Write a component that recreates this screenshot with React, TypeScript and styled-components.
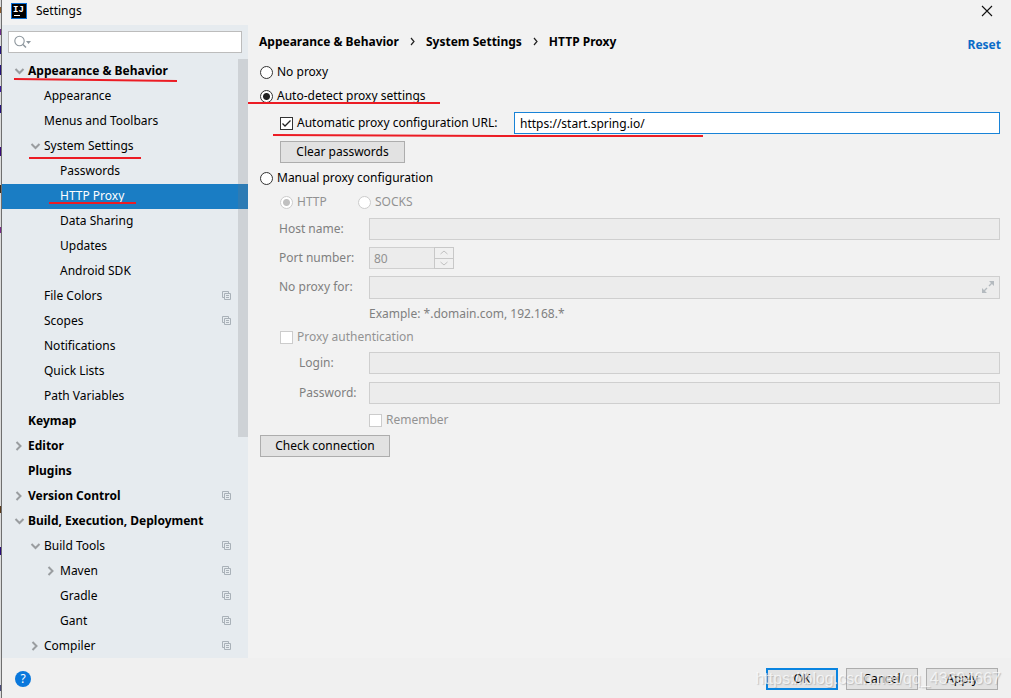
import React from "react";
import styled, { createGlobalStyle, css } from "styled-components";

const GlobalStyle = createGlobalStyle`
  *, *::before, *::after { box-sizing: border-box; }
  body {
    margin: 0;
    font-family: "Noto Sans", "Open Sans", sans-serif;
    font-size: 12px;
    line-height: 16px;
    color: #000;
    background: #f2f2f2;
  }
  button, input { font: inherit; color: inherit; margin: 0; }
`;

const Screen = styled.div`
  display: flex;
  height: 100vh;
  min-height: 500px;
  position: relative;
  overflow: hidden;
`;

const EditorEdge = styled.div`
  flex: none;
  width: 2px;
  background: #dcdcdc;
  border-right: 1px solid #6f6f6f;
  overflow: hidden;
`;

const Dialog = styled.div`
  flex: 1;
  min-width: 0;
  display: flex;
  flex-direction: column;
`;

const TitleBar = styled.header`
  flex: none;
  display: flex;
  align-items: center;
  gap: 9px;
  height: 25px;
  padding: 0 18px 3px 9px;
`;

const Title = styled.h1`
  flex: 1;
  margin: 0;
  font-size: 12px;
  font-weight: 400;
`;

const IconButton = styled.button`
  display: flex;
  padding: 0;
  border: 0;
  background: none;
`;

const Body = styled.div`
  flex: 1;
  min-height: 0;
  display: flex;
`;

const Sidebar = styled.nav`
  flex: none;
  width: 246px;
  display: flex;
  flex-direction: column;
  background: #e6ebef;
`;

const SearchBox = styled.label`
  flex: none;
  display: flex;
  align-items: center;
  height: 22px;
  margin: 6px;
  padding-left: 5px;
  border: 1px solid #bcbcbc;
  background: #fff;
`;

const SearchInput = styled.input`
  flex: 1;
  min-width: 0;
  padding: 0 4px;
  border: 0;
  outline: 0;
  background: none;
`;

const TreeArea = styled.div`
  flex: 1;
  min-height: 0;
  position: relative;
  overflow: hidden;
`;

const Tree = styled.ul`
  margin: 0;
  padding: 0;
  list-style: none;
`;

const TreeRow = styled.button<{ $level: number; $bold?: boolean; $selected?: boolean }>`
  display: flex;
  align-items: center;
  width: 100%;
  height: 25px;
  padding: 0 17px 2px ${(p) => 10 + p.$level * 16}px;
  border: 0;
  text-align: left;
  font-weight: ${(p) => (p.$bold ? 700 : 400)};
  color: ${(p) => (p.$selected ? "#fff" : "#000")};
  background: ${(p) => (p.$selected ? "#1a7dc4" : "transparent")};
`;

const Twisty = styled.span`
  flex: none;
  display: flex;
  width: 16px;
`;

const RowText = styled.span`
  flex: 1;
  white-space: nowrap;
`;

const ScrollThumb = styled.div`
  position: absolute;
  top: 0;
  right: 0;
  width: 10px;
  height: 378px;
  background: rgba(120, 120, 125, 0.21);
`;

const Panel = styled.main`
  flex: 1;
  min-width: 0;
  padding: 0 11px;
`;

const PanelHeader = styled.div`
  display: flex;
  justify-content: space-between;
  align-items: center;
  height: 35px;
  margin-right: -1px;
  padding-bottom: 2px;
`;

const Crumbs = styled.div`
  display: flex;
  align-items: center;
  gap: 9px;
  font-weight: 700;
`;

const ResetLink = styled.a`
  padding-top: 6px;
  font-weight: 700;
  color: #0a6cc8;
  text-decoration: none;
`;

const FormRow = styled.div<{ $height?: number; $indent?: number; $off?: boolean }>`
  display: flex;
  align-items: center;
  height: ${(p) => p.$height ?? 24}px;
  padding-left: ${(p) => p.$indent ?? 0}px;
  color: ${(p) => (p.$off ? "#808080" : "#000")};
`;

const CheckLabel = styled.label<{ $width?: number; $off?: boolean }>`
  flex: none;
  display: flex;
  align-items: center;
  gap: 4px;
  width: ${(p) => (p.$width ? `${p.$width}px` : "auto")};
  color: ${(p) => (p.$off ? "#929292" : "inherit")};
`;

const FieldLabel = styled.label<{ $width: number }>`
  flex: none;
  width: ${(p) => p.$width}px;
`;

const mark = css`
  appearance: none;
  flex: none;
  width: 13px;
  height: 13px;
  border: 1px solid #333;
  background: #fff center / 100% no-repeat;
  &:disabled { border-color: #cccccc; }
`;

const Radio = styled.input.attrs({ type: "radio" })`
  ${mark}
  border-radius: 50%;
  &:checked { background-image: radial-gradient(circle, #222 3px, transparent 4px); }
  &:disabled:checked { background-image: radial-gradient(circle, #c0c0c0 3px, transparent 4px); }
`;

const CheckInput = styled.input.attrs({ type: "checkbox" })`
  ${mark}
`;

const CheckHolder = styled.span`
  display: flex;
  position: relative;
`;

const Tick = styled.svg`
  position: absolute;
  inset: 0;
  pointer-events: none;
`;

const TextField = styled.input`
  flex: 1;
  min-width: 0;
  height: 22px;
  padding: 0 5px;
  border: 1px solid #cfcfcf;
  border-radius: 0;
  outline: 0;
  background: #ececec;
`;

const UrlField = styled(TextField)`
  border-color: #1883d7;
  background: #fff;
`;

const ExpandHolder = styled.div`
  flex: 1;
  display: flex;
  align-items: center;
  height: 23px;
  padding-right: 5px;
  border: 1px solid #cfcfcf;
  background: #ececec;
`;

const BareField = styled(TextField)`
  border: 0;
  height: 20px;
`;

const PortField = styled(TextField)`
  flex: none;
  width: 65px;
  padding: 0 4px;
  border-right: 0;
  color: #929292;
`;

const Spinner = styled.div`
  display: flex;
  flex-direction: column;
  width: 20px;
  height: 22px;
  border: 1px solid #c8c8c8;
`;

const SpinButton = styled.button`
  flex: 1;
  display: flex;
  align-items: center;
  justify-content: center;
  min-height: 0;
  padding: 0;
  border: 0;
  background: #f0f0f0;
  & + & { border-top: 1px solid #c8c8c8; }
`;

const PushButton = styled.button<{ $width: number; $primary?: boolean }>`
  width: ${(p) => p.$width}px;
  height: 22px;
  padding: 0;
  line-height: 18px;
  border: ${(p) => (p.$primary ? "2px solid #0a84e0" : "1px solid #adadad")};
  background: #e2e2e2;
`;

const Footer = styled.footer`
  flex: none;
  display: flex;
  align-items: center;
  gap: 8px;
  height: 40px;
  padding: 2px 13px 0;
  background: #f0f0f0;
`;

const FooterSpace = styled.span`
  flex: 1;
`;

const Watermark = styled.span`
  position: absolute;
  right: 10px;
  bottom: 9px;
  font-family: "Liberation Sans", sans-serif;
  font-size: 16px;
  line-height: 20px;
  color: rgba(255, 255, 255, 0.7);
  text-shadow: 1px 1px 1px rgba(130, 130, 130, 0.4);
  pointer-events: none;
`;

const Marks = styled.svg`
  position: absolute;
  top: 0;
  left: 0;
  pointer-events: none;
`;

const ideMarks: [number, number, string][] = [
  [7, 6, "#8a5a2a"], [29, 6, "#6a2a8a"], [46, 8, "#25127a"], [65, 10, "#25127a"],
  [86, 6, "#3a1a9a"], [105, 8, "#25127a"], [147, 9, "#3a0a7a"], [185, 8, "#3a2a1a"],
  [227, 6, "#7a2a8a"], [506, 7, "#5a3a1a"], [547, 8, "#2a0a7a"], [685, 6, "#4a4a7a"],
];

function CodeSliver() {
  return (
    <svg width="1" height="698" aria-hidden="true">
      {ideMarks.map(([y, h, c]) => <rect key={y} y={y} width="1" height={h} fill={c} />)}
    </svg>
  );
}

function Logo() {
  return (
    <svg width="16" height="16" viewBox="0 0 16 16" aria-hidden="true">
      <rect width="16" height="16" fill="#0a6fd6" />
      <rect x="1" y="1" width="14" height="14" fill="#000" />
      <text x="2" y="9" fontSize="9" fontWeight="700" fontFamily="Liberation Mono, monospace" fill="#fff">IJ</text>
      <path d="M3 12.5h6" stroke="#fff" strokeWidth="1" />
    </svg>
  );
}

function Chevron({ open }: { open: boolean }) {
  return (
    <svg width="14" height="12" viewBox="0 0 14 12" fill="none" stroke="#9a9da0" strokeWidth="2" aria-hidden="true">
      <path d={open ? "M3.5 4L7.5 8L11.5 4" : "M4.5 2L8.5 6L4.5 10"} />
    </svg>
  );
}

function ProjectIcon() {
  return (
    <svg width="9" height="9" viewBox="0 0 9 9" fill="none" stroke="#a9b1b8" aria-hidden="true">
      <path d="M2 6.5H.5V.5H6.5V2M2.5 2.5H8.5V8.5H2.5ZM4 4.5H7M4 6.5H7" />
    </svg>
  );
}

type Item = { text: string; level: number; open?: boolean; project?: boolean; bold?: boolean; selected?: boolean };

const items: Item[] = [
  { text: "Appearance & Behavior", level: 0, open: true, bold: true },
  { text: "Appearance", level: 1 },
  { text: "Menus and Toolbars", level: 1 },
  { text: "System Settings", level: 1, open: true },
  { text: "Passwords", level: 2 },
  { text: "HTTP Proxy", level: 2, selected: true },
  { text: "Data Sharing", level: 2 },
  { text: "Updates", level: 2 },
  { text: "Android SDK", level: 2 },
  { text: "File Colors", level: 1, project: true },
  { text: "Scopes", level: 1, project: true },
  { text: "Notifications", level: 1 },
  { text: "Quick Lists", level: 1 },
  { text: "Path Variables", level: 1 },
  { text: "Keymap", level: 0, bold: true },
  { text: "Editor", level: 0, open: false, bold: true },
  { text: "Plugins", level: 0, bold: true },
  { text: "Version Control", level: 0, open: false, bold: true, project: true },
  { text: "Build, Execution, Deployment", level: 0, open: true, bold: true },
  { text: "Build Tools", level: 1, open: true, project: true },
  { text: "Maven", level: 2, open: false, project: true },
  { text: "Gradle", level: 2, project: true },
  { text: "Gant", level: 2, project: true },
  { text: "Compiler", level: 1, open: false, project: true },
];

function CrumbArrow() {
  return (
    <svg width="9" height="9" viewBox="0 0 9 9" fill="none" stroke="#222" strokeWidth="1.2" aria-hidden="true">
      <path d="M3 1L6 4.5L3 8" />
    </svg>
  );
}

export default function App() {
  return (
    <Screen>
      <GlobalStyle />
      <EditorEdge><CodeSliver /></EditorEdge>
      <Dialog>
        <TitleBar>
          <Logo />
          <Title>Settings</Title>
          <IconButton aria-label="Close">
            <svg width="12" height="12" viewBox="0 0 12 12" stroke="#111" strokeWidth="1.1" aria-hidden="true">
              <path d="M1 1L11 11M11 1L1 11" />
            </svg>
          </IconButton>
        </TitleBar>
        <Body>
          <Sidebar aria-label="Settings pages">
            <SearchBox>
              <svg width="17" height="14" viewBox="0 0 17 14" fill="none" stroke="#8d969d" aria-hidden="true">
                <circle cx="5.5" cy="6" r="4.7" strokeWidth="1.1" />
                <path d="M9 9.5L12 12.5" strokeWidth="1.5" />
                <path d="M12 6h5l-2.5 3z" fill="#8d969d" stroke="none" />
              </svg>
              <SearchInput type="text" aria-label="Search settings" />
            </SearchBox>
            <TreeArea>
              <Tree>
                {items.map((it) => (
                  <li key={it.text}>
                    <TreeRow $level={it.level} $bold={it.bold} $selected={it.selected} aria-expanded={it.open}>
                      <Twisty>{it.open !== undefined && <Chevron open={it.open} />}</Twisty>
                      <RowText>{it.text}</RowText>
                      {it.project && <ProjectIcon />}
                    </TreeRow>
                  </li>
                ))}
              </Tree>
              <ScrollThumb />
            </TreeArea>
          </Sidebar>
          <Panel>
            <PanelHeader>
              <Crumbs>
                <span>Appearance &amp; Behavior</span>
                <CrumbArrow />
                <span>System Settings</span>
                <CrumbArrow />
                <span>HTTP Proxy</span>
              </Crumbs>
              <ResetLink href="#reset">Reset</ResetLink>
            </PanelHeader>
            <FormRow $indent={1}>
              <CheckLabel><Radio name="mode" />No proxy</CheckLabel>
            </FormRow>
            <FormRow $indent={1}>
              <CheckLabel><Radio name="mode" defaultChecked />Auto-detect proxy settings</CheckLabel>
            </FormRow>
            <FormRow $height={30} $indent={21}>
              <CheckLabel $width={234}>
                <CheckHolder>
                  <CheckInput defaultChecked />
                  <Tick width="13" height="13" viewBox="0 0 13 13" fill="none" stroke="#222" strokeWidth="1.3">
                    <path d="M2.5 6.5L5 9L10.5 3.5" />
                  </Tick>
                </CheckHolder>
                Automatic proxy configuration URL:
              </CheckLabel>
              <UrlField type="text" aria-label="Automatic proxy configuration URL" defaultValue="https://start.spring.io/" />
            </FormRow>
            <FormRow $height={28} $indent={21}>
              <PushButton $width={125}>Clear passwords</PushButton>
            </FormRow>
            <FormRow $indent={1}>
              <CheckLabel><Radio name="mode" />Manual proxy configuration</CheckLabel>
            </FormRow>
            <FormRow $indent={21}>
              <CheckLabel $width={78} $off><Radio name="kind" disabled defaultChecked />HTTP</CheckLabel>
              <CheckLabel $off><Radio name="kind" disabled />SOCKS</CheckLabel>
            </FormRow>
            <FormRow $height={30} $indent={20} $off>
              <FieldLabel $width={90} htmlFor="host">Host name:</FieldLabel>
              <TextField id="host" type="text" disabled />
            </FormRow>
            <FormRow $height={28} $indent={20} $off>
              <FieldLabel $width={90} htmlFor="port">Port number:</FieldLabel>
              <PortField id="port" type="text" disabled defaultValue="80" />
              <Spinner>
                <SpinButton disabled aria-label="Increase">
                  <svg width="8" height="5" viewBox="0 0 8 5" fill="none" stroke="#c0c0c0"><path d="M.5 4L4 1L7.5 4" /></svg>
                </SpinButton>
                <SpinButton disabled aria-label="Decrease">
                  <svg width="8" height="5" viewBox="0 0 8 5" fill="none" stroke="#c0c0c0"><path d="M.5 1L4 4L7.5 1" /></svg>
                </SpinButton>
              </Spinner>
            </FormRow>
            <FormRow $height={30} $indent={20} $off>
              <FieldLabel $width={90} htmlFor="bypass">No proxy for:</FieldLabel>
              <ExpandHolder>
                <BareField id="bypass" type="text" disabled />
                <svg width="12" height="12" viewBox="0 0 12 12" fill="#b4babf" stroke="#b4babf" aria-hidden="true">
                  <path d="M7 0H12V5ZM0 7V12H5Z" stroke="none" />
                  <path d="M10 2L7 5M2 10L5 7" strokeWidth="1.4" />
                </svg>
              </ExpandHolder>
            </FormRow>
            <FormRow $indent={110} $off>Example: *.domain.com, 192.168.*</FormRow>
            <FormRow $height={22} $indent={21}>
              <CheckLabel $off><CheckInput disabled />Proxy authentication</CheckLabel>
            </FormRow>
            <FormRow $height={30} $indent={40} $off>
              <FieldLabel $width={70} htmlFor="login">Login:</FieldLabel>
              <TextField id="login" type="text" disabled />
            </FormRow>
            <FormRow $height={30} $indent={40} $off>
              <FieldLabel $width={70} htmlFor="password">Password:</FieldLabel>
              <TextField id="password" type="password" disabled />
            </FormRow>
            <FormRow $indent={110}>
              <CheckLabel $off><CheckInput disabled />Remember</CheckLabel>
            </FormRow>
            <FormRow $height={28} $indent={1}>
              <PushButton $width={130}>Check connection</PushButton>
            </FormRow>
          </Panel>
        </Body>
        <Footer>
          <IconButton aria-label="Help">
            <svg width="16" height="16" viewBox="0 0 16 16" aria-hidden="true">
              <circle cx="8" cy="8" r="8" fill="#0a78dc" />
              <text x="8" y="12" fontSize="12" textAnchor="middle" fill="#fff">?</text>
            </svg>
          </IconButton>
          <FooterSpace />
          <PushButton $width={72} $primary>OK</PushButton>
          <PushButton $width={72}>Cancel</PushButton>
          <PushButton $width={72}>Apply</PushButton>
        </Footer>
      </Dialog>
      <Watermark>https://blog.csdn.net/qq_43694667</Watermark>
      <Marks width="710" height="210" fill="none" stroke="#ec1c24" strokeWidth="2" aria-hidden="true">
        <path d="M14 79L100 80L177 81M29 158H141M49 203H136M248 103H440M273 135L500 136H703" />
      </Marks>
    </Screen>
  );
}
